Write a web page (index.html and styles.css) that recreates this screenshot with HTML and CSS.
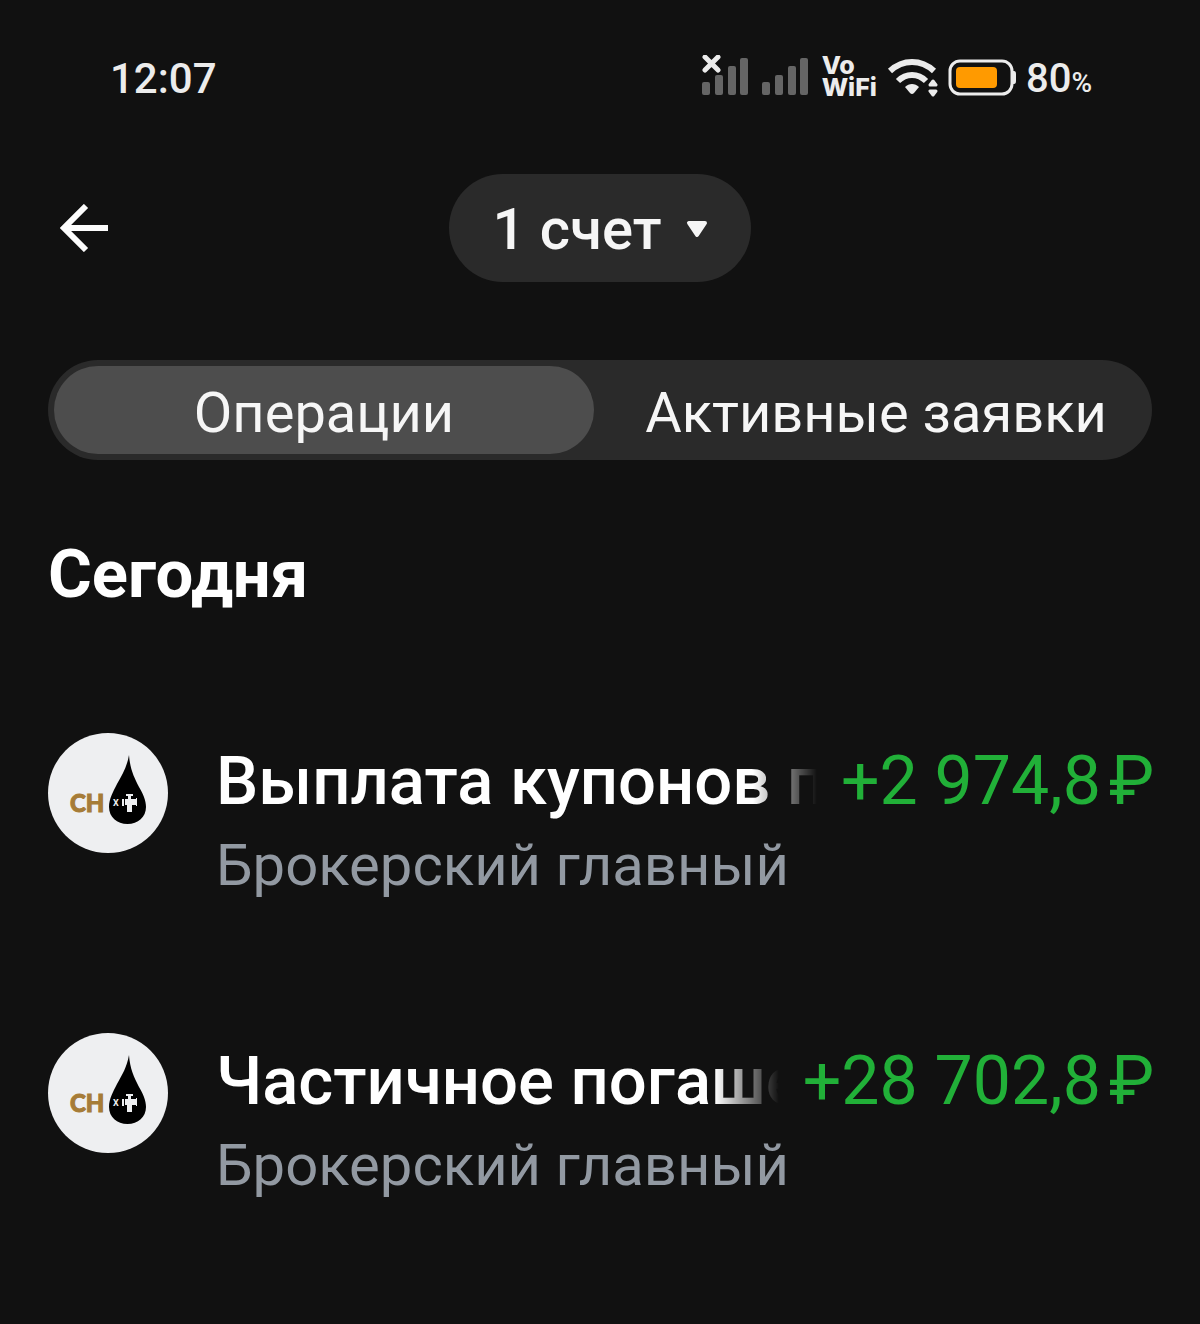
FILE: index.html
```html
<!DOCTYPE html>
<html lang="ru">
<head>
    <meta charset="UTF-8">
    <title>Операции</title>
    <meta name="viewport" content="width=device-width, initial-scale=1.0" />
    <link rel="stylesheet" href="styles.css">
</head>

<body>
    <div class="status-bar">
        <span class="time">12:07</span>
        <div class="indicators">
            <svg width="110" height="46" viewBox="0 2 110 46" aria-hidden="true">
                <path d="M3 4L16 17M16 4L3 17" stroke="#ececec" stroke-width="5" stroke-linecap="round"/>
                <g fill="#656565">
                    <rect x="0" y="29" width="8" height="13" rx="2"/>
                    <rect x="13" y="22" width="8" height="20" rx="2"/>
                    <rect x="26" y="13" width="8" height="29" rx="2"/>
                    <rect x="38" y="5" width="8" height="37" rx="2"/>
                    <rect x="60" y="29" width="8" height="13" rx="2"/>
                    <rect x="73" y="22" width="8" height="20" rx="2"/>
                    <rect x="86" y="13" width="8" height="29" rx="2"/>
                    <rect x="98" y="5" width="8" height="37" rx="2"/>
                </g>
            </svg>
            <span class="vowifi">Vo<br>WiFi</span>
            <svg width="51" height="40" viewBox="0 1 51 40" aria-hidden="true">
                <g fill="none" stroke="#ececec" stroke-width="6">
                    <path d="M3 14C16 2 34 2 47 14"/>
                    <path d="M11 24C19 16 31 16 39 24"/>
                </g>
                <path d="M18 30C22 26 28 26 32 30L27 36Q25 38 23 36Z" fill="#ececec"/>
                <path d="M46 24L49 28H43ZM46 38L43 34H49Z" fill="#ececec" stroke="#ececec" stroke-width="3" stroke-linejoin="round"/>
            </svg>
            <svg width="68" height="38" viewBox="0 2 68 38" aria-hidden="true">
                <rect x="2" y="4" width="62" height="33" rx="10" fill="none" stroke="#ececec" stroke-width="3"/>
                <path d="M65 14H66Q68 14 68 17V24Q68 27 66 27H65Z" fill="#ececec"/>
                <rect x="8" y="10" width="41" height="21" rx="4" fill="#ff9a00"/>
            </svg>
            <span class="battery">80<small>%</small></span>
        </div>
    </div>

    <header class="header">
        <button class="back" type="button" aria-label="Назад">
            <svg width="48" height="48" viewBox="0 0 48 48" aria-hidden="true">
                <path d="M26 2L4 24L26 46M4 24H48" fill="none" stroke="#fcfcfc" stroke-width="6"/>
            </svg>
        </button>
        <button class="account" type="button">
            1 счет
            <svg width="22" height="20" viewBox="0 0 22 20" aria-hidden="true">
                <path d="M3 4H19L11 16Z" fill="#f6f6f6" stroke="#f6f6f6" stroke-width="4" stroke-linejoin="round"/>
            </svg>
        </button>
    </header>

    <nav class="tabs">
        <button class="tab active" type="button">Операции</button>
        <button class="tab" type="button">Активные заявки</button>
    </nav>

    <main>
        <h2>Сегодня</h2>
        <ul class="operations">
            <li class="operation">
                <svg class="logo" viewBox="0 0 120 120" aria-hidden="true">
                    <circle cx="60" cy="60" r="60" fill="#eeeff1"/>
                    <text x="22" y="79" class="logo-name">CH</text>
                    <path d="M81 22C82 36 86 44 91 54C95 61 98 67 98 74C98 84 90 91 79.500 91C69 91 61 84 61 74C61 66 65 59 69 51C74 42 79 34 81 22Z" fill="#000"/>
                    <text x="65" y="73" class="logo-x">X</text>
                    <path d="M74 66h2v7h-2zM78 61h7v2h-2v3h5v-1h1v8h-1v-1h-4v7h-5v-7h-2v-6h3v-3h-2z" fill="#eeeff1"/>
                </svg>
                <div class="info">
                    <div class="row">
                        <span class="title">Выплата купонов по</span>
                        <span class="amount">+2 974,8<span class="currency">₽</span></span>
                    </div>
                    <div class="subtitle">Брокерский главный</div>
                </div>
            </li>
            <li class="operation">
                <svg class="logo" viewBox="0 0 120 120" aria-hidden="true">
                    <circle cx="60" cy="60" r="60" fill="#eeeff1"/>
                    <text x="22" y="79" class="logo-name">CH</text>
                    <path d="M81 22C82 36 86 44 91 54C95 61 98 67 98 74C98 84 90 91 79.500 91C69 91 61 84 61 74C61 66 65 59 69 51C74 42 79 34 81 22Z" fill="#000"/>
                    <text x="65" y="73" class="logo-x">X</text>
                    <path d="M74 66h2v7h-2zM78 61h7v2h-2v3h5v-1h1v8h-1v-1h-4v7h-5v-7h-2v-6h3v-3h-2z" fill="#eeeff1"/>
                </svg>
                <div class="info">
                    <div class="row">
                        <span class="title">Частичное погашение</span>
                        <span class="amount">+28 702,8<span class="currency">₽</span></span>
                    </div>
                    <div class="subtitle">Брокерский главный</div>
                </div>
            </li>
        </ul>
    </main>
</body>

</html>
```

FILE: styles.css
```css
* {
    box-sizing: border-box;
}

body {
    margin: 0;
    min-height: 100vh;
    background: #111111;
    color: #ffffff;
    font-family: Roboto, sans-serif;
}

button {
    border: none;
    background: none;
    color: inherit;
    font-family: inherit;
    cursor: pointer;
}

/* status bar */
.status-bar {
    display: flex;
    align-items: center;
    justify-content: space-between;
    padding: 54px 108px 0 110px;
    height: 102px;
    color: #ececec;
    font-size: 42px;
    font-weight: 500;
}

.indicators {
    display: flex;
    align-items: center;
    gap: 10px;
}

.vowifi {
    padding-bottom: 4px;
    font-family: Inter, sans-serif;
    font-size: 25px;
    font-weight: 800;
    line-height: 22px;
}

.battery {
    font-size: 40px;
    font-weight: 500;
}

.battery small {
    font-size: 28px;
}

/* header */
.header {
    display: grid;
    grid-template-columns: 1fr auto 1fr;
    align-items: center;
    padding: 72px 48px 0;
}

.back {
    justify-self: start;
    display: flex;
    padding: 12px;
}

.account {
    display: flex;
    align-items: center;
    gap: 24px;
    height: 108px;
    padding: 2px 43px 0;
    border-radius: 54px;
    background: #2a2a2a;
    color: #f6f6f6;
    font-size: 58px;
    font-weight: 500;
}

/* tabs */
.tabs {
    display: grid;
    grid-template-columns: 1fr 1fr;
    gap: 12px;
    margin: 78px 48px 0;
    padding: 6px;
    border-radius: 50px;
    background: #2a2a2a;
}

.tab {
    height: 88px;
    padding: 6px 0 0;
    border-radius: 44px;
    color: #f6f6f6;
    font-size: 56px;
    white-space: nowrap;
}

.tab.active {
    background: #4d4d4d;
}

/* operations */
main {
    padding: 74px 46px 0 48px;
}

h2 {
    margin: 0;
    font-size: 67px;
    font-weight: 700;
    line-height: 80px;
}

.operations {
    margin: 0;
    padding: 81px 0 0;
    list-style: none;
}

.operation {
    display: flex;
    gap: 48px;
    height: 300px;
    padding-top: 44px;
}

.logo {
    flex: none;
    width: 120px;
    height: 120px;
    margin-top: -6px;
}

.logo-name {
    fill: #a67c37;
    stroke: #a67c37;
    stroke-width: 1px;
    font-family: Lato, sans-serif;
    font-size: 24px;
    font-weight: 900;
}

.logo-x {
    fill: #eeeff1;
    font-size: 9px;
    font-weight: 700;
}

.info {
    flex: 1;
    min-width: 0;
}

.row {
    display: flex;
    gap: 24px;
    line-height: 84px;
    white-space: nowrap;
}

.title {
    flex: 1;
    min-width: 0;
    overflow: hidden;
    font-size: 67px;
    font-weight: 500;
    -webkit-mask-image: linear-gradient(to left, transparent, #000 64px);
    mask-image: linear-gradient(to left, transparent, #000 64px);
}

.amount {
    color: #21b038;
    font-size: 68px;
}

.currency {
    margin-left: 8px;
}

.subtitle {
    color: #9299a2;
    font-size: 58px;
    line-height: 84px;
}
```
